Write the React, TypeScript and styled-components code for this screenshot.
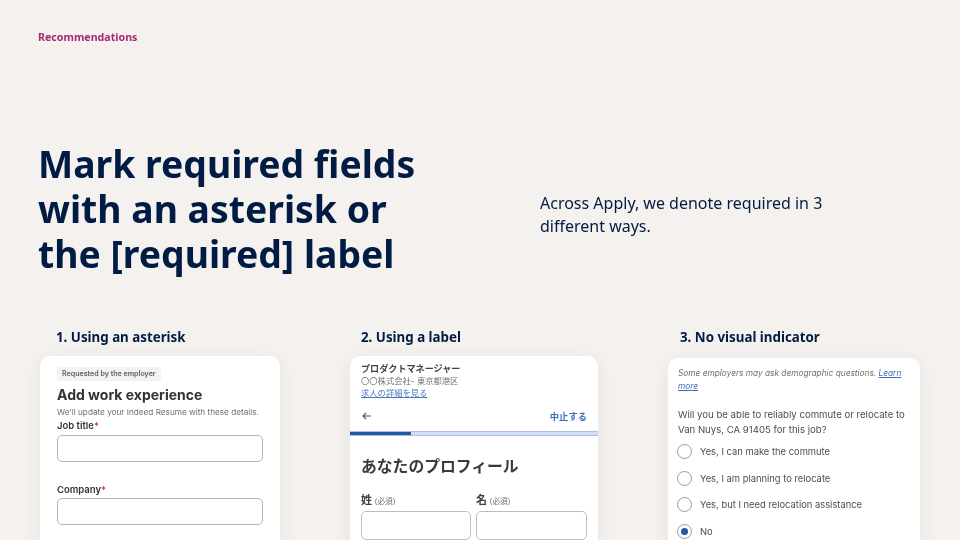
import React from 'react';
import styled, { createGlobalStyle } from 'styled-components';

const NAVY = '#001c45';
const BLUE = '#2557a7';
const CJK = '"Inter", "Noto Sans CJK JP", sans-serif';

const GlobalStyle = createGlobalStyle`
    html, body {
        margin: 0;
        padding: 0;
        background: #f5f1ee;
    }
`;

const App: React.FC = () => {
    return (
        <Slide>
            <GlobalStyle />
            <Eyebrow>Recommendations</Eyebrow>

            <Hero>
                <Title>Mark required fields with an asterisk or the [required] label</Title>
                <Lead>Across Apply, we denote required in 3 different ways.</Lead>
            </Hero>

            <Columns>
                <Column>
                    <ColumnTitle indent={16}>1. Using an asterisk</ColumnTitle>
                    <Card>
                        <WorkBody>
                            <Tag>Requested by the employer</Tag>
                            <WorkTitle>Add work experience</WorkTitle>
                            <WorkHint>We'll update your Indeed Resume with these details.</WorkHint>
                            <WorkLabel>Job title<Star>*</Star></WorkLabel>
                            <TextField aria-label="Job title" />
                            <WorkLabel spaced>Company<Star>*</Star></WorkLabel>
                            <TextField aria-label="Company" />
                        </WorkBody>
                    </Card>
                </Column>

                <Column>
                    <ColumnTitle indent={11}>2. Using a label</ColumnTitle>
                    <Card>
                        <JobHeader>
                            <JobName>プロダクトマネージャー</JobName>
                            <JobMeta>〇〇株式会社- 東京都港区</JobMeta>
                            <JobLink>求人の詳細を見る</JobLink>
                        </JobHeader>
                        <NavRow>
                            <svg width="9" height="8" viewBox="0 0 9 8" fill="none" stroke="#555" strokeWidth="1.1">
                                <path d="M9 4H1M4 1 1 4l3 3" />
                            </svg>
                            <Cancel>中止する</Cancel>
                        </NavRow>
                        <Progress>
                            <ProgressFill />
                        </Progress>
                        <ProfileBody>
                            <ProfileTitle>あなたのプロフィール</ProfileTitle>
                            <NameGrid>
                                <NameField>
                                    <NameLabel>姓 <Required>(必須)</Required></NameLabel>
                                    <NameInput aria-label="姓" />
                                </NameField>
                                <NameField>
                                    <NameLabel>名 <Required>(必須)</Required></NameLabel>
                                    <NameInput aria-label="名" />
                                </NameField>
                            </NameGrid>
                        </ProfileBody>
                    </Card>
                </Column>

                <Column>
                    <ColumnTitle indent={12}>3. No visual indicator</ColumnTitle>
                    <Card lowered>
                        <SurveyBody>
                            <Notice>
                                Some employers may ask demographic questions. <NoticeLink>Learn</NoticeLink> <NoticeLink>more</NoticeLink>
                            </Notice>
                            <Question>Will you be able to reliably commute or relocate to Van Nuys, CA 91405 for this job?</Question>
                            <Options>
                                <Option><Radio /> Yes, I can make the commute</Option>
                                <Option><Radio /> Yes, I am planning to relocate</Option>
                                <Option><Radio /> Yes, but I need relocation assistance</Option>
                                <Option><Radio checked /> No</Option>
                            </Options>
                        </SurveyBody>
                    </Card>
                </Column>
            </Columns>
        </Slide>
    )
}

const Slide = styled.main`
    width: 960px;
    height: 540px;
    overflow: hidden;
    box-sizing: border-box;
    padding: 30px 0 0 38px;
    background: #f5f1ee;
    font-family: "Noto Sans", sans-serif;
`;

const Eyebrow = styled.div`
    color: #a42c72;
    font-size: 10.67px;
    font-weight: 700;
    line-height: 14px;
    will-change: transform;
`;

const Hero = styled.section`
    display: flex;
    align-items: center;
    margin-top: 97px;
`;

const Title = styled.h1`
    width: 502px;
    flex: none;
    box-sizing: border-box;
    padding-right: 100px;
    margin: 0;
    color: ${NAVY};
    font-size: 37.33px;
    font-weight: 700;
    line-height: 45px;
    will-change: transform;
`;

const Lead = styled.p`
    width: 310px;
    margin: 12px 0 0;
    color: ${NAVY};
    font-size: 16px;
    line-height: 23px;
    will-change: transform;
`;

const Columns = styled.section`
    display: grid;
    grid-template-columns: 240px 248px 252px;
    column-gap: 70px;
    margin: 51px 0 0 2px;
`;

const Column = styled.div`
    display: flex;
    flex-direction: column;
`;

const ColumnTitle = styled.h2<{ indent: number }>`
    margin: 0 0 9px;
    padding-left: ${props => props.indent}px;
    color: ${NAVY};
    font-size: 13.33px;
    font-weight: 700;
    line-height: 20px;
    will-change: transform;
`;

const Card = styled.div<{ lowered?: boolean }>`
    height: 210px;
    margin-top: ${props => (props.lowered ? 2 : 0)}px;
    border-radius: 10px 10px 0 0;
    background: #fff;
    box-shadow: 0 3px 18px rgba(60, 40, 30, 0.07);
    overflow: hidden;
    font-family: ${CJK};
`;

const WorkBody = styled.div`
    padding: 4px 17px 0;
    filter: blur(0.5px);
`;

const Tag = styled.span`
    display: inline-block;
    padding: 0 5px;
    border-radius: 3px;
    background: #f3f2f1;
    color: #5f5f5f;
    font-size: 7.1px;
    font-weight: 600;
    line-height: 14px;
`;

const WorkTitle = styled.h3`
    margin: 4px 0 0;
    color: #333;
    font-size: 14px;
    font-weight: 700;
    line-height: 20px;
`;

const WorkHint = styled.p`
    margin: 1px 0 0;
    color: #707070;
    font-size: 8.2px;
    line-height: 12px;
`;

const WorkLabel = styled.div<{ spaced?: boolean }>`
    margin: ${props => (props.spaced ? 21 : 1)}px 0 ${props => (props.spaced ? 2 : 3)}px;
    color: #333;
    font-size: 9.5px;
    font-weight: 600;
    line-height: 13px;
`;

const Star = styled.span`
    color: #b3404a;
`;

const TextField = styled.input`
    display: block;
    box-sizing: border-box;
    width: 100%;
    height: 27px;
    padding: 0;
    border: 1px solid #b5b5b5;
    border-radius: 5px;
    background: #fff;
`;

const JobHeader = styled.div`
    padding: 6px 11px 0;
    filter: blur(0.5px);
`;

const JobName = styled.div`
    color: #404040;
    font-size: 9.1px;
    font-weight: 700;
    line-height: 13px;
`;

const JobMeta = styled.div`
    color: #707070;
    font-size: 8.3px;
    line-height: 12px;
`;

const JobLink = styled.a`
    display: block;
    color: #4a78c0;
    font-size: 8.3px;
    line-height: 12px;
    text-decoration: underline;
`;

const NavRow = styled.div`
    display: flex;
    align-items: center;
    justify-content: space-between;
    height: 16px;
    margin-top: 9px;
    padding: 0 11px 0 12px;
    filter: blur(0.5px);
`;

const Cancel = styled.span`
    color: #3f6fbb;
    font-size: 9.3px;
    font-weight: 700;
`;

const Progress = styled.div`
    box-sizing: border-box;
    height: 5px;
    margin-top: 7px;
    border-top: 1px solid #a9bfe4;
    border-bottom: 1px solid #a9bfe4;
    background: #d3def2;
`;

const ProgressFill = styled.div`
    width: 61px;
    height: 100%;
    background: ${BLUE};
`;

const ProfileBody = styled.div`
    padding: 20px 11px 0;
    filter: blur(0.5px);
`;

const ProfileTitle = styled.h3`
    margin: 0;
    color: #3a3a3a;
    font-size: 15.8px;
    font-weight: 700;
    line-height: 22px;
`;

const NameGrid = styled.div`
    display: grid;
    grid-template-columns: 110px 111px;
    column-gap: 5px;
    margin-top: 15px;
`;

const NameField = styled.div`
    display: flex;
    flex-direction: column;
    gap: 2px;
`;

const NameLabel = styled.div`
    color: #404040;
    font-size: 11px;
    font-weight: 700;
    line-height: 14px;
`;

const Required = styled.span`
    color: #707070;
    font-size: 7.7px;
    font-weight: 400;
`;

const NameInput = styled.input`
    display: block;
    box-sizing: border-box;
    width: 100%;
    height: 29px;
    padding: 0;
    border: 1px solid #bdbdbd;
    border-radius: 5px;
    background: #fff;
`;

const SurveyBody = styled.div`
    padding: 9px 14px 0 10px;
    filter: blur(0.5px);
`;

const Notice = styled.p`
    margin: 0;
    color: #707070;
    font-size: 8.3px;
    font-style: italic;
    line-height: 13px;
`;

const NoticeLink = styled.a`
    color: #3f6fbb;
    text-decoration: underline;
`;

const Question = styled.p`
    margin: 15px 0 0;
    color: #4d4d4d;
    font-size: 9.6px;
    line-height: 14.5px;
`;

const Options = styled.div`
    display: flex;
    flex-direction: column;
    gap: 11px;
    margin: 7px 0 0 -1px;
`;

const Option = styled.label`
    display: flex;
    align-items: center;
    gap: 8px;
    height: 15.5px;
    color: #4d4d4d;
    font-size: 9.4px;
`;

const Radio = styled.span<{ checked?: boolean }>`
    display: flex;
    align-items: center;
    justify-content: center;
    flex: none;
    box-sizing: border-box;
    width: 15px;
    height: 15px;
    border: 1.2px solid #999;
    border-radius: 50%;
    background: #fff;

    &::after {
        content: '';
        width: 7px;
        height: 7px;
        border-radius: 50%;
        background: ${props => (props.checked ? BLUE : 'transparent')};
    }
`;

export default App
